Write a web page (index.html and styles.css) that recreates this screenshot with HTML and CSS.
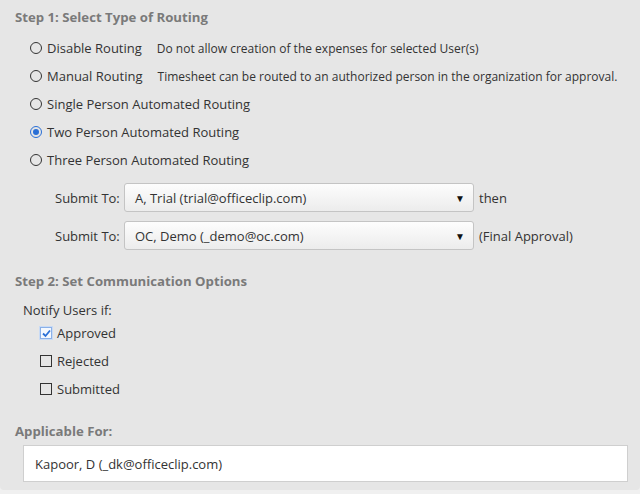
FILE: index.html
```html
<!DOCTYPE html>
<html lang="en">

<head>
    <meta charset="UTF-8" />
    <title>Routing Options</title>
    <link rel="stylesheet" href="styles.css">
</head>

<body>
    <div class="panel">
        <!-- Step 1 -->
        <h3 class="step">Step 1: Select Type of Routing</h3>
        <div class="routes">
            <div class="opt"><span class="radio"></span><span class="lbl">Disable Routing</span><span class="desc">Do not allow creation of the expenses for selected User(s)</span></div>
            <div class="opt"><span class="radio"></span><span class="lbl">Manual Routing</span><span class="desc">Timesheet can be routed to an authorized person in the organization for approval.</span></div>
            <div class="opt"><span class="radio"></span><span class="lbl">Single Person Automated Routing</span></div>
            <div class="opt"><span class="radio on"></span><span class="lbl">Two Person Automated Routing</span></div>
            <div class="opt"><span class="radio"></span><span class="lbl">Three Person Automated Routing</span></div>
        </div>

        <div class="submit">
            <div class="srow">
                <span class="slabel">Submit To:</span>
                <div class="select"><span>A, Trial (trial@officeclip.com)</span><span class="arrow">&#9660;</span></div>
                <span class="after">then</span>
            </div>
            <div class="srow">
                <span class="slabel">Submit To:</span>
                <div class="select"><span>OC, Demo (_demo@oc.com)</span><span class="arrow">&#9660;</span></div>
                <span class="after">(Final Approval)</span>
            </div>
        </div>

        <!-- Step 2 -->
        <h3 class="step">Step 2: Set Communication Options</h3>
        <p class="notify">Notify Users if:</p>
        <div class="checks">
            <div class="chk"><span class="box on"><svg width="9" height="9" viewBox="0 0 9 9"><path d="M1 4.5 L3.5 7 L8 1.5" fill="none" stroke="#2a6fd6" stroke-width="1.8"/></svg></span>Approved</div>
            <div class="chk"><span class="box"></span>Rejected</div>
            <div class="chk"><span class="box"></span>Submitted</div>
        </div>

        <h3 class="step applic">Applicable For:</h3>
        <div class="userbox">Kapoor, D (_dk@officeclip.com)</div>
    </div>
</body>

</html>
```

FILE: styles.css
```css
* {
    margin: 0;
    padding: 0;
    box-sizing: border-box;
}

body {
    font-family: "Open Sans", Arial, sans-serif;
    font-size: 13px;
    color: #333;
    background: #f0f0f0;
}

.panel {
    background: #e6e6e6;
    height: 490px;
    border-radius: 0 0 4px 4px;
    padding: 7px 12px 0 15px;
}

.step {
    font-size: 13.2px;
    font-weight: bold;
    color: #7a7a7a;
    height: 20px;
    line-height: 20px;
}

/* Step 1 */
.routes {
    padding-left: 15px;
    margin-top: 7px;
}

.opt {
    display: flex;
    align-items: center;
    height: 28px;
}

.radio {
    width: 12px;
    height: 12px;
    border: 1px solid #333;
    border-radius: 50%;
    margin-right: 5px;
    position: relative;
}

.radio.on {
    border-color: #2a6fd6;
}

.radio.on::after {
    content: "";
    position: absolute;
    left: 2px;
    top: 2px;
    width: 6px;
    height: 6px;
    border-radius: 50%;
    background: #2a6fd6;
}

.desc {
    margin-left: 15px;
    font-size: 12px;
}

.submit {
    padding-left: 40px;
    margin-top: 9px;
}

.srow {
    display: flex;
    align-items: center;
    margin-bottom: 9px;
}

.slabel {
    width: 69px;
}

.select {
    width: 350px;
    height: 29px;
    border: 1px solid #c4c4c4;
    border-radius: 3px;
    background: linear-gradient(#fdfdfd, #ececec);
    display: flex;
    align-items: center;
    justify-content: space-between;
    padding: 0 8px 0 10px;
}

.arrow {
    font-size: 10px;
    color: #111;
}

.after {
    margin-left: 5px;
}

/* Step 2 */
.submit + .step {
    margin-top: 21px;
}

.notify {
    margin-top: 10px;
    padding-left: 8px;
}

.checks {
    padding-left: 25px;
}

.chk {
    display: flex;
    align-items: center;
    height: 28px;
}

.box {
    width: 12px;
    height: 12px;
    border: 1px solid #333;
    margin-right: 5px;
    display: flex;
    align-items: center;
    justify-content: center;
}

.box.on {
    border-color: #8ab0e8;
    outline: 1px solid #c9dbf5;
    background: #f4f8fe;
}

.applic {
    margin-top: 18px;
}

.userbox {
    margin: 4px 0 0 8px;
    height: 37px;
    background: #fff;
    border: 1px solid #cfcfcf;
    display: flex;
    align-items: center;
    padding-left: 11px;
}
```
